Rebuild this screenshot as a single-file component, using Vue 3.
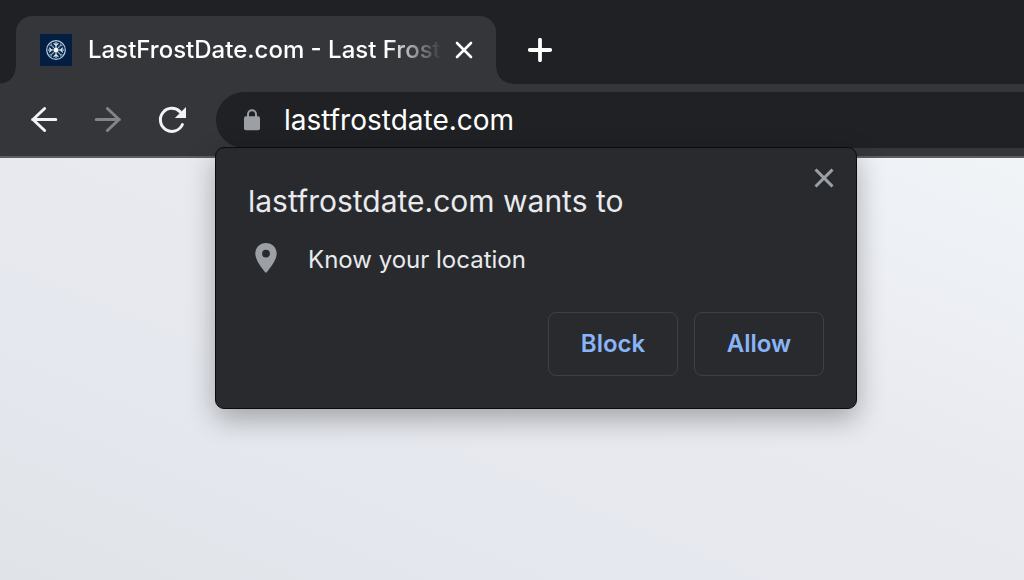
<script setup>
import { ref } from 'vue'

const address = ref('lastfrostdate.com')
const promptOpen = ref(true)
const arms = [0, 90, 180, 270]
</script>

<template>
  <div class="browser">
    <header class="tab-strip">
      <div class="tab">
        <svg class="favicon" viewBox="0 0 32 32" aria-hidden="true">
          <rect width="32" height="32" fill="#041e42" />
          <circle cx="16" cy="16" r="9.3" fill="#082448" stroke="#b4cfdc" stroke-width="1.2" />
          <g v-for="angle in arms" :key="angle" :transform="`rotate(${angle} 16 16)`">
            <path d="M16 16V8M13.600 9.200 16 11.600l2.400-2.400" fill="none" stroke="#d5e6ee" stroke-width="1.2" />
            <path d="M16 16l4.800-4.800M20.800 9.400v1.800h1.800" fill="none" stroke="#8fb3cb" stroke-width="1.1" />
          </g>
          <circle cx="16" cy="16" r="2.2" fill="#f2f8fa" />
        </svg>
        <span class="tab-title">LastFrostDate.com - Last Frost</span>
        <button class="icon-button tab-close" type="button" aria-label="Close tab">
          <svg viewBox="0 0 20 20" width="20" height="20"><path d="M3 3l14 14M17 3 3 17" stroke="#fff" stroke-width="2.6" stroke-linecap="round" /></svg>
        </button>
      </div>
      <button class="icon-button new-tab" type="button" aria-label="New tab">
        <svg viewBox="0 0 24 24" width="24" height="24"><path d="M12 1.8v20.4M1.8 12h20.4" stroke="#fff" stroke-width="3.8" stroke-linecap="round" /></svg>
      </button>
    </header>

    <nav class="toolbar">
      <div class="nav-buttons">
        <button class="icon-button" type="button" aria-label="Back">
          <svg viewBox="0 0 32 32" width="32" height="32"><path d="M27.8 15.5H4.600M16.600 4.500 5 15.500l11.600 11" fill="none" stroke="#f1f3f4" stroke-width="3" stroke-linecap="round" stroke-linejoin="round" /></svg>
        </button>
        <button class="icon-button" type="button" aria-label="Forward" disabled>
          <svg viewBox="0 0 32 32" width="32" height="32"><path d="M4.200 15.500h23.200M15.400 4.500l11.600 11-11.600 11" fill="none" stroke="#838487" stroke-width="3" stroke-linecap="round" stroke-linejoin="round" /></svg>
        </button>
        <button class="icon-button" type="button" aria-label="Reload">
          <svg viewBox="0 0 32 32" width="32" height="32">
            <path d="M26.4 20.5A11.500 11.500 0 1 1 24.200 7.900" fill="none" stroke="#f1f3f4" stroke-width="3" stroke-linecap="round" />
            <path d="M30 3v11H18.900z" fill="#f1f3f4" />
          </svg>
        </button>
      </div>
      <div class="address-area">
        <label class="address-bar">
          <svg viewBox="0 0 16 22" width="16" height="22" aria-hidden="true">
            <rect x="0" y="7.2" width="16" height="14" rx="2" fill="#9aa0a6" />
            <path d="M4 8.5V5.2a4 4 0 0 1 8 0v3.3" fill="none" stroke="#9aa0a6" stroke-width="2" />
          </svg>
          <input v-model="address" type="text" aria-label="Address" spellcheck="false" />
        </label>
        <section v-if="promptOpen" class="prompt" role="dialog" aria-labelledby="prompt-title">
          <button class="icon-button prompt-close" type="button" aria-label="Close" @click="promptOpen = false">
            <svg viewBox="0 0 20 20" width="20" height="20"><path d="M2.600 2.600l14.800 14.800M17.400 2.600 2.600 17.400" stroke="#9aa0a6" stroke-width="3" stroke-linecap="square" /></svg>
          </button>
          <h1 id="prompt-title">lastfrostdate.com wants to</h1>
          <div class="permission">
            <svg viewBox="0 0 36 34" width="36" height="34" aria-hidden="true">
              <path d="M18 0C12 0 7.300 4.600 7.300 10.600 7.300 18.600 18 30 18 30s10.700-11.400 10.700-19.400C28.700 4.600 24 0 18 0zm0 14.500a3.900 3.900 0 1 1 0-7.800 3.900 3.900 0 0 1 0 7.800z" fill="#9aa0a6" />
            </svg>
            <span>Know your location</span>
          </div>
          <div class="actions">
            <button type="button" @click="promptOpen = false">Block</button>
            <button type="button" @click="promptOpen = false">Allow</button>
          </div>
        </section>
      </div>
    </nav>

    <main class="page"></main>
  </div>
</template>

<style>
body {
  margin: 0;
}
</style>

<style scoped>
.browser {
  display: flex;
  flex-direction: column;
  min-height: 100vh;
  overflow: hidden;
  font-family: Inter, "Liberation Sans", sans-serif;
  font-size: 24px;
  color: #e8eaed;
}

button,
input {
  font: inherit;
  color: inherit;
}

svg {
  display: block;
  flex: none;
}

.icon-button {
  display: flex;
  flex: none;
  align-items: center;
  justify-content: center;
  width: 32px;
  height: 32px;
  padding: 0;
  border: 0;
  background: none;
}

.tab-strip {
  display: flex;
  align-items: flex-end;
  gap: 28px;
  padding: 16px 16px 0;
  background: #202124;
}

.tab {
  position: relative;
  display: flex;
  align-items: center;
  box-sizing: border-box;
  width: 480px;
  height: 68px;
  padding: 0 16px 0 24px;
  border-radius: 16px 16px 0 0;
  background: #35363a;
}

.tab::before,
.tab::after {
  content: "";
  position: absolute;
  bottom: 0;
  width: 16px;
  height: 16px;
}

.tab::before {
  right: 100%;
  background: radial-gradient(circle at 0 0, transparent 15px, #35363a 16px);
}

.tab::after {
  left: 100%;
  background: radial-gradient(circle at 100% 0, transparent 15px, #35363a 16px);
}

.favicon {
  width: 32px;
  height: 32px;
}

.tab-title {
  flex: 1;
  min-width: 0;
  margin: 0 6px 0 16px;
  color: #fff;
  font-weight: 500;
  line-height: 32px;
  white-space: nowrap;
  mask-image: linear-gradient(to right, #000 calc(100% - 54px), transparent);
}

.new-tab {
  height: 68px;
}

.toolbar {
  display: flex;
  align-items: center;
  gap: 28px;
  padding: 8px 0 8px 28px;
  border-bottom: 2px solid #5c5d61;
  background: #35363a;
}

.nav-buttons {
  display: flex;
  gap: 32px;
}

.address-area {
  position: relative;
  flex: 1;
}

.address-bar {
  display: flex;
  align-items: center;
  gap: 24px;
  height: 56px;
  padding-left: 28px;
  border-radius: 28px 0 0 28px;
  background: #202124;
}

.address-bar input {
  flex: 1;
  min-width: 0;
  padding: 0;
  border: 0;
  outline: 0;
  background: none;
  color: #fff;
  font-size: 28px;
}

.prompt {
  position: absolute;
  top: 55px;
  left: -1px;
  z-index: 1;
  box-sizing: border-box;
  width: 642px;
  padding: 32px;
  border: 1px solid #0b0b0d;
  border-radius: 9px;
  background: #292a2d;
  box-shadow: 0 10px 28px rgba(0, 0, 0, 0.3);
}

.prompt-close {
  position: absolute;
  top: 14px;
  right: 16px;
}

.prompt h1 {
  margin: 0;
  font-size: 30px;
  font-weight: 400;
  line-height: 42px;
}

.permission {
  display: flex;
  align-items: center;
  gap: 24px;
  margin: 20px 0 34px;
  line-height: 36px;
}

.actions {
  display: flex;
  justify-content: flex-end;
  gap: 16px;
}

.actions button {
  min-width: 130px;
  height: 64px;
  padding: 0 24px 2px;
  border: 1px solid #3f4043;
  border-radius: 8px;
  background: none;
  color: #8ab4f8;
  font-weight: 600;
}

.page {
  flex: 1;
  background: linear-gradient(to top right, #e0e4e9, #e5e8ee 30%, #e9eaf0 60%, #f0f4f7);
}
</style>
